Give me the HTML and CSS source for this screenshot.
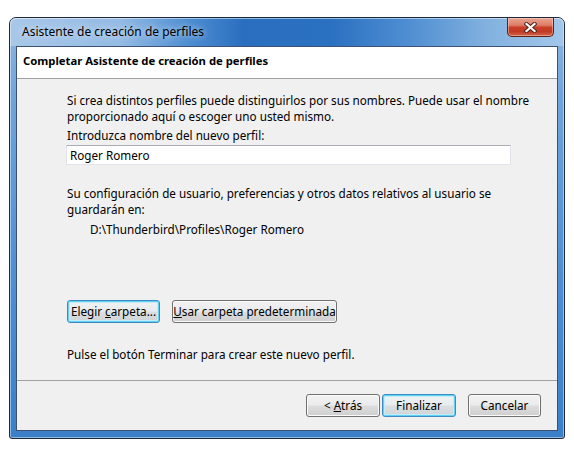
FILE: index.html
```html
<!DOCTYPE html>
<html lang="es">
<head>
<meta charset="utf-8">
<title>Asistente de creación de perfiles</title>
<link rel="stylesheet" href="styles.css">
</head>
<body>
<div class="window">
  <div class="titlebar">
    <span class="title">Asistente de creación de perfiles</span>
    <div class="close">
      <svg width="13" height="11" viewBox="0 0 13 11">
        <path d="M2.5 2 L10.5 9 M10.5 2 L2.5 9" stroke="#4b2620" stroke-width="4.2" stroke-linecap="square" fill="none"/>
        <path d="M2.5 2 L10.5 9 M10.5 2 L2.5 9" stroke="#ffffff" stroke-width="2.2" stroke-linecap="square" fill="none"/>
      </svg>
    </div>
  </div>
  <div class="client">
    <div class="header">Completar Asistente de creación de perfiles</div>
    <div class="content">
      <p class="text multi intro">Si crea distintos perfiles puede distinguirlos por sus nombres. Puede usar el nombre<br>proporcionado aquí o escoger uno usted mismo.</p>
      <p class="text label">Introduzca nombre del nuevo perfil:</p>
      <div class="input">Roger Romero</div>
      <p class="text multi info">Su configuración de usuario, preferencias y otros datos relativos al usuario se<br>guardarán en:</p>
      <p class="text path">D:\Thunderbird\Profiles\Roger Romero</p>
      <div class="folder-buttons">
        <div class="btn default btn-choose"><span>Elegir <u>c</u>arpeta...</span></div>
        <div class="btn btn-default-folder"><span><u>U</u>sar carpeta predeterminada</span></div>
      </div>
      <p class="text finish">Pulse el botón Terminar para crear este nuevo perfil.</p>
    </div>
    <div class="footer">
      <div class="btn btn-back"><span>&lt; <u>A</u>trás</span></div>
      <div class="btn default btn-finish"><span>Finalizar</span></div>
      <div class="btn btn-cancel"><span>Cancelar</span></div>
    </div>
  </div>
</div>
</body>
</html>
```
FILE: styles.css
```css
* { box-sizing: border-box; }

html, body {
  margin: 0;
  padding: 0;
  background: #ffffff;
}

body {
  font-family: "Noto Sans", "Open Sans", sans-serif;
  font-size: 11.7px;
  color: #000000;
  width: 574px;
  height: 454px;
  overflow: hidden;
}

.window {
  margin: 17px 0 0 9px;
  width: 556px;
  height: 422px;
  border: 1px solid #1f2b3a;
  border-radius: 7px 7px 3px 3px;
  padding: 0 6px 7px 6px;
  display: flex;
  flex-direction: column;
  background-color: #4a8cd0;
  background-image: linear-gradient(to bottom, #8fb7e2 0%, #6ea4da 20%, #4f90d3 60%, #3a7fc8 100%);
  box-shadow: inset 0 0 0 1px rgba(255, 255, 255, 0.45);
}

.titlebar {
  height: 28px;
  margin: 0 -6px;
  padding: 0 10px 0 6px;
  border-radius: 6px 6px 0 0;
  display: flex;
  align-items: flex-start;
  justify-content: space-between;
  background-color: #2f74c2;
  background-image: linear-gradient(to right, #a9c8e8 0%, #94bbe4 20%, #4f8ed2 32%, #2a6fbf 42%, #2b71c1 58%, #4f8ed2 72%, #82b1df 86%, #a3c7ea 100%);
  box-shadow: inset 0 1px 0 rgba(255, 255, 255, 0.5), inset 1px 0 0 rgba(255, 255, 255, 0.4), inset -1px 0 0 rgba(255, 255, 255, 0.4);
}

.title {
  margin-top: 6px;
  padding-left: 6px;
  font-size: 12px;
  line-height: 16px;
  color: #000000;
  text-shadow: 0 0 7px rgba(255, 255, 255, 0.9);
}

.close {
  width: 47px;
  height: 19px;
  border: 1px solid #5e241b;
  border-top: none;
  border-radius: 0 0 5px 5px;
  background-color: #c8402a;
  background-image: linear-gradient(to bottom, #e9a594 0%, #de7d66 40%, #c8402a 52%, #c23a24 75%, #d2644a 100%);
  box-shadow: inset 0 0 0 1px rgba(255, 220, 210, 0.45);
  display: flex;
  align-items: center;
  justify-content: center;
}

.close svg { display: block; }

.client {
  flex: 1;
  border: 1px solid #3d5270;
  background: #f0f0f0;
  display: flex;
  flex-direction: column;
}

.header {
  height: 32px;
  background: #ffffff;
  border-bottom: 1px solid #a0a0a0;
  font-weight: bold;
  font-size: 11.3px;
  padding: 6px 0 0 6px;
  line-height: 16px;
}

.content {
  height: 301px;
  padding: 13px 0 0 50px;
  display: flex;
  flex-direction: column;
  align-items: flex-start;
}

.text {
  margin: 0;
  line-height: 16px;
  white-space: nowrap;
}

.label { margin-top: 3px; }

.input {
  margin: 2px 0 0 -1px;
  width: 445px;
  height: 20px;
  background: #ffffff;
  border: 1px solid #e2e3ea;
  border-top-color: #abadb3;
  padding: 0 0 0 3px;
  line-height: 18px;
}

.info { margin-top: 20px; }

.path {
  margin-top: 4px;
  padding-left: 23px;
}

.folder-buttons {
  margin-top: 63px;
  display: flex;
  gap: 12px;
}

.finish { margin-top: 23px; }

.footer {
  flex: 1;
  border-top: 1px solid #a0a0a0;
  padding: 13px 16px 0 0;
  display: flex;
  justify-content: flex-end;
  align-items: flex-start;
}

.btn {
  height: 23px;
  border: 1px solid #707070;
  border-radius: 3px;
  background-color: #e5e5e5;
  background-image: linear-gradient(to bottom, #f2f2f2 0%, #ebebeb 48%, #dddddd 52%, #cfcfcf 100%);
  box-shadow: inset 0 0 0 1px #fbfbfb;
  display: flex;
  align-items: center;
  justify-content: center;
  line-height: 15px;
  white-space: nowrap;
}

.btn.default {
  border-color: #3c8cbf;
  box-shadow: inset 0 0 0 1px #5ed1f4, inset 0 0 0 2px #c3ebf8;
  background-image: linear-gradient(to bottom, #f0f2f3 0%, #e8ecee 48%, #dbdfe1 52%, #cfd3d5 100%);
}

.btn-choose { width: 93px; }
.btn-default-folder { width: 165px; }

.btn-back { width: 74px; margin-right: 2px; }
.btn-finish { width: 74px; margin-right: 12px; }
.btn-cancel { width: 73px; }
```
